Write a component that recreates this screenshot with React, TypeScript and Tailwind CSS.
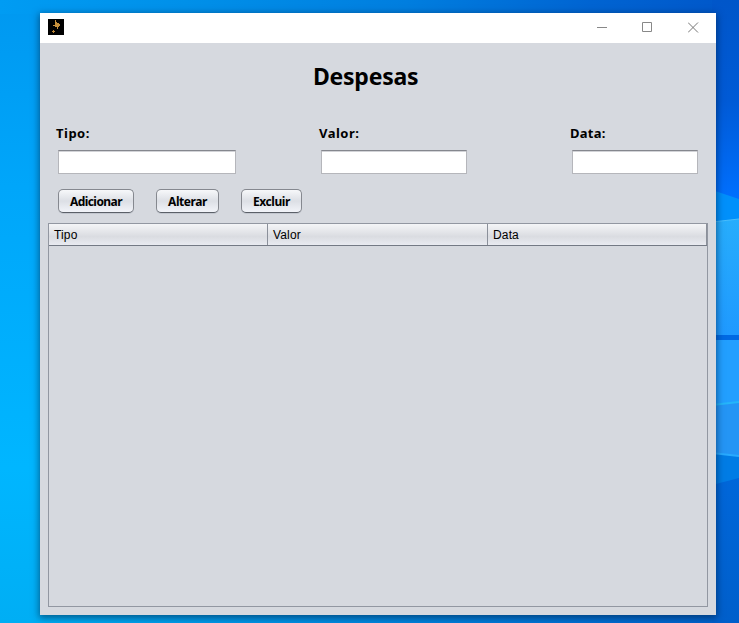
import React from "react";

function Wallpaper() {
  return (
    <svg className="absolute inset-0 h-full w-full" viewBox="0 0 739 623" preserveAspectRatio="none" aria-hidden="true">
      <defs>
        <linearGradient id="left" x1="0" y1="0" x2="0" y2="1">
          <stop offset="0" stopColor="#0098f0" />
          <stop offset="0.3" stopColor="#00a6fa" />
          <stop offset="0.75" stopColor="#00b6ff" />
          <stop offset="1" stopColor="#00aef4" />
        </linearGradient>
        <linearGradient id="top" x1="0" y1="0" x2="1" y2="0">
          <stop offset="0" stopColor="#009cf3" />
          <stop offset="0.25" stopColor="#0090e9" />
          <stop offset="0.55" stopColor="#007edf" />
          <stop offset="0.8" stopColor="#0064d2" />
          <stop offset="1" stopColor="#0056c9" />
        </linearGradient>
        <linearGradient id="bottom" x1="0" y1="0" x2="1" y2="0">
          <stop offset="0" stopColor="#00aef4" />
          <stop offset="0.5" stopColor="#0086df" />
          <stop offset="1" stopColor="#005fcb" />
        </linearGradient>
        <linearGradient id="right" x1="0" y1="0" x2="0" y2="1">
          <stop offset="0" stopColor="#0056c9" />
          <stop offset="0.5" stopColor="#005ad6" />
          <stop offset="1" stopColor="#0070ff" />
        </linearGradient>
        <linearGradient id="pane" x1="0" y1="0" x2="0" y2="1">
          <stop offset="0" stopColor="#27adfc" />
          <stop offset="1" stopColor="#1f99ff" />
        </linearGradient>
        <linearGradient id="floor" x1="0" y1="0" x2="0" y2="1">
          <stop offset="0" stopColor="#0068dc" />
          <stop offset="1" stopColor="#005fcb" />
        </linearGradient>
      </defs>
      <rect width="739" height="623" fill="url(#left)" />
      <rect width="739" height="14" fill="url(#top)" />
      <rect x="40" y="614" width="699" height="9" fill="url(#bottom)" />
      <rect x="712" width="27" height="200" fill="url(#right)" />
      <path d="M712 190L739 199V225H712Z" fill="#0090fb" />
      <path d="M712 222L739 219V336H712Z" fill="url(#pane)" />
      <path d="M712 222L739 219" stroke="#49bdfc" />
      <rect x="712" y="335" width="27" height="5" fill="#0069e3" />
      <rect x="712" y="340" width="27" height="65" fill="#229fff" />
      <path d="M712 405L739 402V456L712 453Z" fill="#2495f5" />
      <path d="M712 405L739 402" stroke="#25b5fa" strokeWidth="2" />
      <path d="M712 453L739 456V623H712Z" fill="url(#floor)" />
      <path d="M712 453L739 456V478L712 485Z" fill="#007ce5" />
      <path d="M712 453L739 456" stroke="#28aaff" strokeWidth="2" />
    </svg>
  );
}

function TitleBar() {
  return (
    <header className="flex h-[30px] shrink-0 items-start justify-between bg-white pl-2 pr-[17px]">
      <svg className="mt-[6px] h-4 w-4" viewBox="0 0 16 16" shapeRendering="crispEdges">
        <rect width="16" height="16" fill="#000" />
        <path d="M7 1h1v2h1v1h2v1h1v2h-1v1h-1v2H9V8H7V7H5V6h2z" fill="#c6903c" />
        <path d="M5 11h1v1h1v1H6v1H5v-1H4v-1h1z" fill="#b98232" />
      </svg>
      <div className="mt-[9px] flex gap-[35px]">
        <button aria-label="Minimizar">
          <svg className="h-[11px] w-[11px]" viewBox="0 0 11 11"><path d="M1 5.5h10" stroke="#888" /></svg>
        </button>
        <button aria-label="Maximizar">
          <svg className="h-[11px] w-[11px]" viewBox="0 0 11 11"><path d="M.5.5h9v9h-9z" fill="none" stroke="#888" /></svg>
        </button>
        <button aria-label="Fechar">
          <svg className="h-[11px] w-[11px]" viewBox="0 0 11 11"><path d="M0 .5l10 10M10 .5l-10 10" stroke="#777" /></svg>
        </button>
      </div>
    </header>
  );
}

function Field({ label, width, tracking }: { label: string; width: string; tracking: string }) {
  return (
    <label className={width}>
      <span className={"-ml-0.5 block h-[27px] text-[13px] leading-5 font-bold " + tracking}>{label}</span>
      <input className="block h-6 w-full border border-[#b5b6bb] border-t-[#85878e] bg-white px-1 shadow-[inset_0_1px_0_#d2d3d7] outline-none" />
    </label>
  );
}

function ActionButton({ text, width, tracking }: { text: string; width: string; tracking: string }) {
  return (
    <button className={"h-6 rounded-[5px] border border-[#85888f] border-b-[#5b6068] bg-linear-to-b from-[#f7f8fa] from-0% via-[#dcdfe5] via-50% to-[#f2f4f9] pt-px text-[12px] leading-5 font-bold whitespace-nowrap shadow-[0_1px_0_#c3c7cf] " + width + " " + tracking}>
      {text}
    </button>
  );
}

export default function App() {
  return (
    <main className="relative h-[623px] w-[739px] overflow-hidden pt-[13px] pl-10 text-black">
      <Wallpaper />
      <section className="relative flex h-[602px] w-[676px] flex-col bg-[#d6d9df] font-['Noto_Sans','Open_Sans',sans-serif] shadow-[0_2px_7px_1px_rgba(0,30,60,0.55)]">
        <TitleBar />
        <h1 className="mt-[16px] h-[64px] pl-[273px] text-[23px] leading-[34px] font-bold tracking-[-0.25px]">Despesas</h1>
        <div className="flex pl-[18px]">
          <Field label="Tipo:" width="mr-[85px] w-[178px]" tracking="tracking-[0.5px]" />
          <Field label="Valor:" width="mr-[105px] w-[146px]" tracking="tracking-[0.5px]" />
          <Field label="Data:" width="w-[126px]" tracking="tracking-[0.25px]" />
        </div>
        <div className="mt-[15px] flex gap-[22px] pl-[18px]">
          <ActionButton text="Adicionar" width="w-[76px]" tracking="tracking-[-0.55px]" />
          <ActionButton text="Alterar" width="w-[63px]" tracking="tracking-[-0.45px]" />
          <ActionButton text="Excluir" width="w-[61px]" tracking="tracking-[-0.45px]" />
        </div>
        <div className="mx-2 mt-[10px] h-[384px] border border-[#9297a1]">
          <div className="flex h-[22px] border-b border-[#747a85] bg-linear-to-b from-[#f4f5f7] from-0% via-[#dadce1] via-60% to-[#e9ebf1] font-['Liberation_Sans',Arial,sans-serif] text-[12px] leading-[22px] tracking-[0.15px]">
            <div className="w-[219px] border-r border-[#8b909a] pl-[5px]">Tipo</div>
            <div className="w-[220px] border-r border-[#8b909a] pl-[5px]">Valor</div>
            <div className="w-[219px] border-r border-[#8b909a] pl-[5px]">Data</div>
          </div>
        </div>
      </section>
    </main>
  );
}
